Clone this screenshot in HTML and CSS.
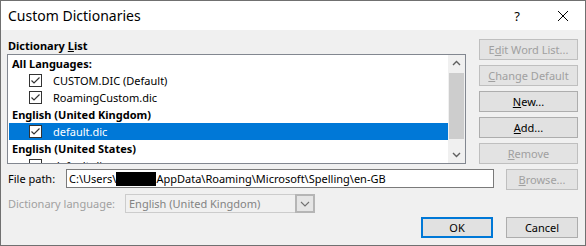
FILE: index.html
```html
<!DOCTYPE html>
<html>
<head>
    <title>Custom Dictionaries</title>
    <link rel="stylesheet" href="styles.css">
</head>
<body>
<div class="window">
    <div class="titlebar">
        <span class="title">Custom Dictionaries</span>
        <span class="help">?</span>
        <svg class="close" width="12" height="12" viewBox="0 0 12 12">
            <path d="M1 1 L11 11 M11 1 L1 11" stroke="#000" stroke-width="1" fill="none"/>
        </svg>
    </div>

    <div class="content">
        <div class="top">
            <div class="list-area">
                <div class="list-label">Dictionary <u>L</u>ist</div>
                <div class="listbox">
                    <div class="items">
                        <div class="group">All Languages:</div>
                        <div class="item">
                            <svg class="check" width="13" height="13" viewBox="0 0 13 13"><rect x="0.5" y="0.5" width="12" height="12" fill="#fff" stroke="#333"/><path d="M2.5 6.5 L5 9 L10.5 3.5" stroke="#333" stroke-width="1.2" fill="none"/></svg>
                            CUSTOM.DIC (Default)
                        </div>
                        <div class="item">
                            <svg class="check" width="13" height="13" viewBox="0 0 13 13"><rect x="0.5" y="0.5" width="12" height="12" fill="#fff" stroke="#333"/><path d="M2.5 6.5 L5 9 L10.5 3.5" stroke="#333" stroke-width="1.2" fill="none"/></svg>
                            RoamingCustom.dic
                        </div>
                        <div class="group">English (United Kingdom)</div>
                        <div class="item selected">
                            <svg class="check" width="13" height="13" viewBox="0 0 13 13"><rect x="0.5" y="0.5" width="12" height="12" fill="#fff" stroke="#333"/><path d="M2.5 6.5 L5 9 L10.5 3.5" stroke="#333" stroke-width="1.2" fill="none"/></svg>
                            default.dic
                        </div>
                        <div class="group">English (United States)</div>
                        <div class="item">
                            <svg class="check" width="13" height="13" viewBox="0 0 13 13"><rect x="0.5" y="0.5" width="12" height="12" fill="#fff" stroke="#333"/></svg>
                            default.dic
                        </div>
                    </div>
                    <div class="scrollbar">
                        <svg class="arrow" width="17" height="17" viewBox="0 0 17 17"><path d="M5 10 L8.5 6.5 L12 10" stroke="#606060" stroke-width="1.4" fill="none"/></svg>
                        <div class="track"><div class="thumb"></div></div>
                        <svg class="arrow" width="17" height="17" viewBox="0 0 17 17"><path d="M5 7 L8.5 10.5 L12 7" stroke="#606060" stroke-width="1.4" fill="none"/></svg>
                    </div>
                </div>
            </div>
            <div class="side-buttons">
                <button class="btn" disabled>E<u>d</u>it Word List...</button>
                <button class="btn" disabled><u>C</u>hange Default</button>
                <button class="btn"><u>N</u>ew...</button>
                <button class="btn"><u>A</u>dd...</button>
                <button class="btn" disabled><u>R</u>emove</button>
            </div>
        </div>

        <div class="path-row">
            <span class="field-label path-label">File path:</span>
            <div class="path-input">C:\Users\<span class="redacted"></span>AppData\Roaming\Microsoft\Spelling\en-GB</div>
            <button class="btn browse" disabled><u>B</u>rowse...</button>
        </div>

        <div class="lang-row">
            <span class="field-label lang-label">Dictionary language:</span>
            <div class="combo">
                <span class="combo-text">English (United Kingdom)</span>
                <span class="combo-drop">
                    <svg width="10" height="6" viewBox="0 0 10 6"><path d="M1 1 L5 5 L9 1" stroke="#707070" stroke-width="1.1" fill="none"/></svg>
                </span>
            </div>
        </div>

        <div class="footer">
            <button class="btn dialog-btn default">OK</button>
            <button class="btn dialog-btn">Cancel</button>
        </div>
    </div>
</div>
</body>
</html>
```

FILE: styles.css
```css
body {
    margin: 0;
    font-family: "Noto Sans", "Open Sans", sans-serif;
    font-size: 11px;
    color: #000;
}

.window {
    width: 586px;
    height: 246px;
    box-sizing: border-box;
    border: 1px solid #707070;
    background-color: #f0f0f0;
    display: flex;
    flex-direction: column;
    overflow: hidden;
}

.titlebar {
    height: 29px;
    flex-shrink: 0;
    background-color: #fff;
    display: flex;
    align-items: center;
    padding-left: 7px;
}

.title {
    font-size: 14px;
    flex: 1;
}

.help {
    font-size: 13px;
    margin-right: 37px;
}

.close {
    margin-right: 16px;
}

.content {
    padding: 0 7px 0 6px;
    display: flex;
    flex-direction: column;
}

.top {
    display: flex;
    gap: 13px;
}

.list-area {
    flex: 1;
    padding-top: 7px;
}

.list-label {
    font-weight: bold;
    line-height: 17px;
    padding-left: 1px;
}

.listbox {
    height: 110px;
    box-sizing: border-box;
    border: 1px solid #828790;
    background-color: #fff;
    display: flex;
    overflow: hidden;
}

.items {
    flex: 1;
    padding-left: 1px;
}

.group {
    height: 17px;
    line-height: 17px;
    font-weight: bold;
    padding-left: 3px;
    white-space: nowrap;
}

.item {
    height: 17px;
    display: flex;
    align-items: center;
    padding-left: 20px;
    white-space: nowrap;
}

.item.selected {
    background-color: #0078d7;
    color: #fff;
}

.check {
    margin-right: 11px;
}

.scrollbar {
    width: 17px;
    background-color: #f0f0f0;
    display: flex;
    flex-direction: column;
}

.track {
    flex: 1;
    padding: 1px 1px;
}

.thumb {
    height: 66px;
    background-color: #cdcdcd;
}

.side-buttons {
    width: 99px;
    padding-top: 9px;
    display: flex;
    flex-direction: column;
    gap: 5px;
}

.btn {
    height: 21px;
    flex-shrink: 0;
    box-sizing: border-box;
    border: 1px solid #adadad;
    background-color: #e1e1e1;
    font-family: inherit;
    font-size: 11px;
    color: #000;
    padding: 0;
    white-space: nowrap;
}

.btn:disabled {
    border-color: #bfbfbf;
    color: #a0a0a0;
    background-color: #e3e3e3;
}

.path-row {
    display: flex;
    align-items: flex-start;
    margin-top: 5px;
    gap: 12px;
}

.field-label {
    line-height: 19px;
    padding-left: 1px;
    white-space: nowrap;
}

.path-label {
    width: 46px;
}

.path-input {
    flex: 1;
    height: 19px;
    box-sizing: border-box;
    border: 1px solid #7a7a7a;
    background-color: #fff;
    line-height: 17px;
    padding-left: 2px;
    white-space: nowrap;
    display: flex;
    align-items: center;
}

.redacted {
    display: inline-block;
    width: 40px;
    height: 14px;
    background-color: #000;
}

.browse {
    width: 72px;
}

.lang-row {
    display: flex;
    margin-top: 4px;
}

.lang-label {
    width: 117px;
    color: #a0a0a0;
}

.combo {
    width: 190px;
    height: 19px;
    box-sizing: border-box;
    border: 1px solid #cccccc;
    display: flex;
}

.combo-text {
    flex: 1;
    color: #838383;
    line-height: 17px;
    padding-left: 3px;
}

.combo-drop {
    width: 20px;
    box-sizing: border-box;
    border: 2px solid #b5b5b5;
    margin: -1px -1px -1px 0;
    height: 19px;
    background-color: #e5e5e5;
    display: flex;
    align-items: center;
    justify-content: center;
}

.footer {
    display: flex;
    justify-content: flex-end;
    gap: 13px;
    margin-top: 4px;
}

.dialog-btn {
    width: 72px;
}

.dialog-btn.default {
    border: 2px solid #0078d7;
}
```
